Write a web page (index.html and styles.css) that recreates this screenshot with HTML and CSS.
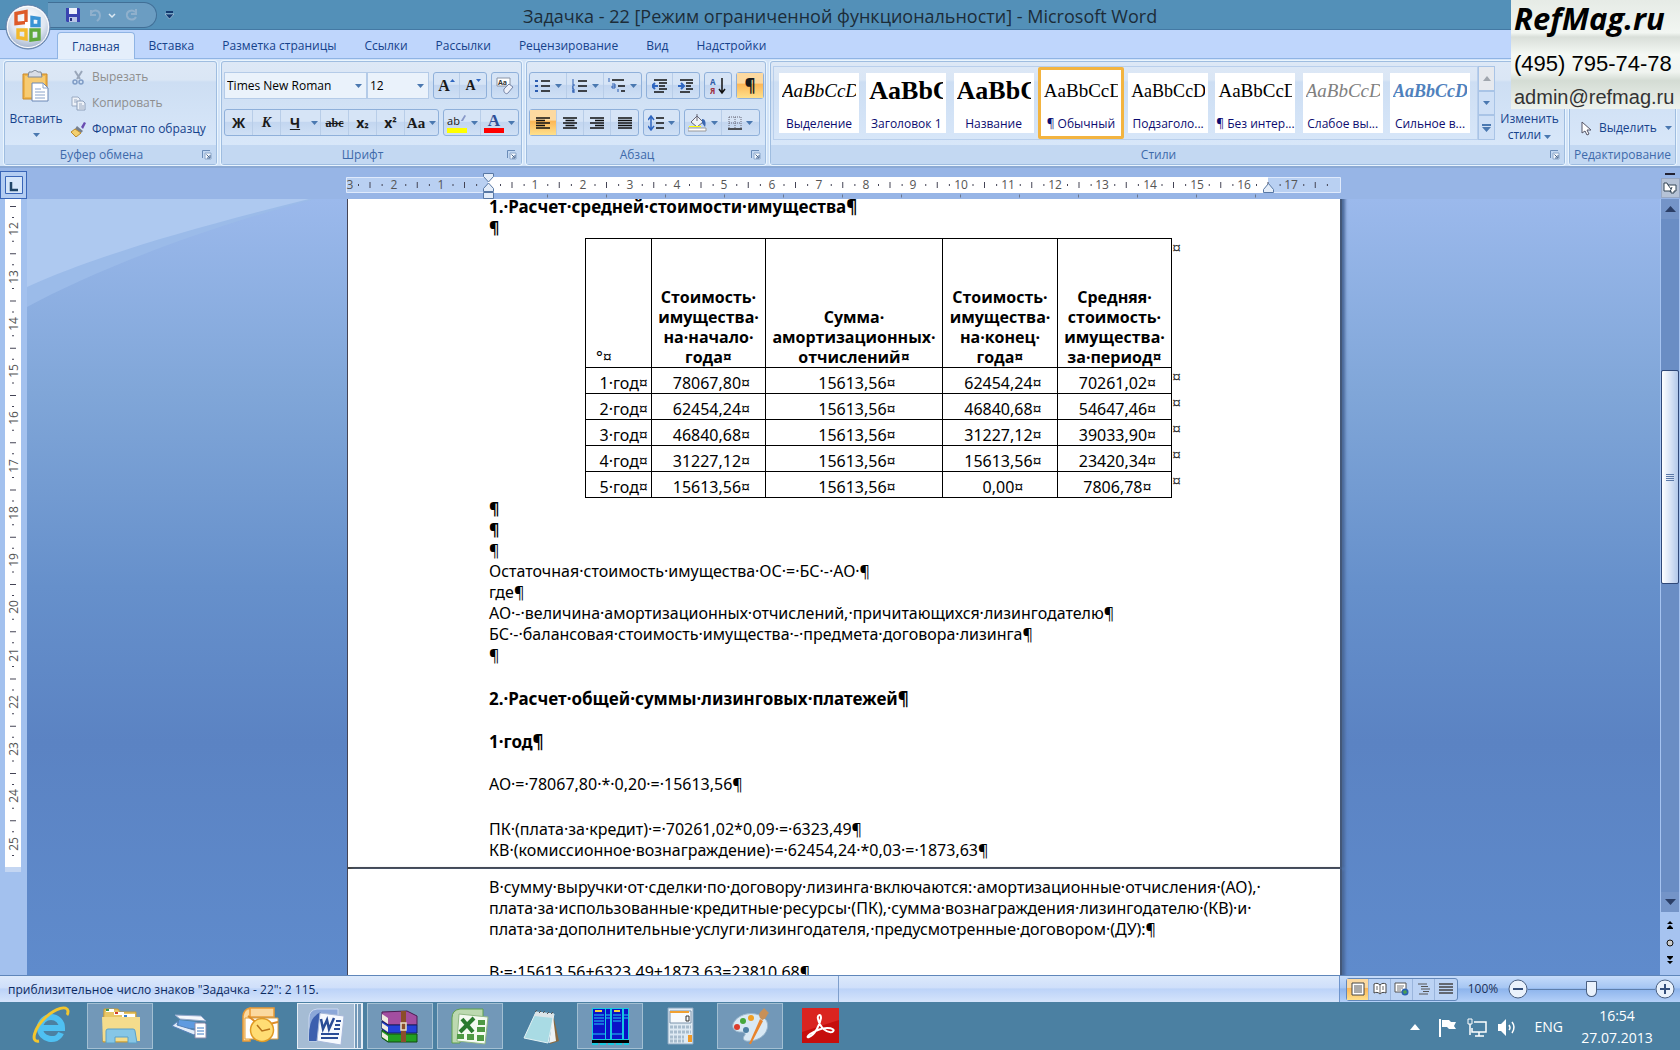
FILE: index.html
```html
<!DOCTYPE html>
<html lang="ru">
<head>
<meta charset="utf-8">
<title>Задачка - 22 [Режим ограниченной функциональности] - Microsoft Word</title>
<link rel="stylesheet" href="styles.css">
</head>
<body>
<svg class="defs" aria-hidden="true">
  <symbol id="caret" viewBox="0 0 7 4"><path d="M0 0h7L3.500 4z" fill="#4a78b0"/></symbol>
  <symbol id="launch" viewBox="0 0 10 10"><path d="M.5 8V.5H8" fill="none" stroke="#6a8cb8"/><path d="M3 3h6v6H3z" fill="#f4f8fd" stroke="#8aa6ca"/><path d="M4.500 4.500l3 3M8 5v3H5" fill="none" stroke="#44658f"/></symbol>
</svg>

<header class="titlebar">
  <button class="orb" aria-label="Кнопка Office">
    <svg viewBox="0 0 46 46" width="46" height="46">
      <defs><radialGradient id="orbg" cx=".5" cy=".35" r=".65"><stop offset="0" stop-color="#fff"/><stop offset=".6" stop-color="#dfe6f0"/><stop offset="1" stop-color="#9fb0cc"/></radialGradient></defs>
      <circle cx="23" cy="23" r="22" fill="url(#orbg)" stroke="#5f7fa8"/>
      <circle cx="23" cy="23" r="20.500" fill="none" stroke="#fff"/>
      <g fill="none" stroke-width="3.400">
        <path d="M11 9.500l10-2v11l-10 1z" stroke="#dd5a28"/>
        <path d="M27 13.500l7 1v7h-7z" stroke="#3a93d4"/>
        <path d="M13 26h8v9l-8-1.500z" stroke="#f3b92c"/>
        <path d="M26 26h8v9l-8 1z" stroke="#5fa83c"/>
      </g>
      <path d="M20 18h5v6h-5z" fill="#fff"/>
    </svg>
  </button>
  <div class="qat">
    <button aria-label="Сохранить"><svg viewBox="0 0 14 14" width="14" height="14"><path d="M1 0h12l1 1v13H1l-1-1V0z" fill="#3a44b0"/><path d="M3 0h8v6H3z" fill="#eef2fb"/><path d="M3 9h8v5H3z" fill="#b9c6e6"/><path d="M4 10h2v3H4z" fill="#26307e"/></svg></button>
    <button aria-label="Отменить"><svg viewBox="0 0 28 14" width="28" height="14"><path d="M3 5c3-4 9-3 9 3 0 3-2 4-3 5M3 2v5h5" fill="none" stroke="#8fb0cc" stroke-width="2"/><path d="M21 6l3 3 3-3" fill="none" stroke="#dbe8f2" stroke-width="1.500"/></svg></button>
    <button aria-label="Повторить"><svg viewBox="0 0 14 14" width="14" height="14"><path d="M11 4C8 1 2 3 3 8c1 4 7 5 9 1M12 1v5H7" fill="none" stroke="#8fb0cc" stroke-width="2"/></svg></button>
  </div>
  <button class="qat-more" aria-label="Настройка панели"><svg viewBox="0 0 9 8" width="9" height="8"><path d="M1 0h7v2H1z" fill="#123a70"/><path d="M0 3h9L4.500 8z" fill="#123a70" stroke="#dfeaf4" stroke-width=".5"/></svg></button>
  <h1>Задачка - 22 [Режим ограниченной функциональности] - Microsoft Word</h1>
</header>

<nav class="tabs">
  <button class="tab active">Главная</button>
  <button class="tab">Вставка</button>
  <button class="tab">Разметка страницы</button>
  <button class="tab">Ссылки</button>
  <button class="tab">Рассылки</button>
  <button class="tab">Рецензирование</button>
  <button class="tab">Вид</button>
  <button class="tab">Надстройки</button>
</nav>

<section class="ribbon">
  <div class="group clipboard">
    <div class="body">
      <button class="big">
        <svg viewBox="0 0 28 32" width="28" height="32"><path d="M1 4h24v25H1z" fill="#f0b54a" stroke="#c8892c"/><path d="M3 6h20v21H3z" fill="#f7cb72"/><path d="M7 2h3l3-2 3 2h3l1 5H6z" fill="#d8dde6" stroke="#7e8896"/><path d="M10 13h11l5 5v13H10z" fill="#fff" stroke="#6b87b5"/><path d="M21 13v5h5M13 19h6M13 22h10M13 25h10M13 28h10" fill="none" stroke="#8aa3ca"/></svg>
        <span>Вставить</span>
        <svg width="7" height="4"><use href="#caret"/></svg>
      </button>
      <div class="stack">
        <button class="line off"><svg viewBox="0 0 15 15" width="15" height="15"><path d="M4 1l5 8M11 1L6 9" stroke="#9aa7ba" stroke-width="2"/><circle cx="4" cy="12" r="2" fill="none" stroke="#7f9cc6" stroke-width="1.500"/><circle cx="10" cy="12" r="2" fill="none" stroke="#7f9cc6" stroke-width="1.500"/></svg>Вырезать</button>
        <button class="line off"><svg viewBox="0 0 15 15" width="15" height="15"><path d="M1 1h6l2 2v7H1z" fill="#eef2f8" stroke="#9aaac2"/><path d="M6 5h6l2 2v7H6z" fill="#eef2f8" stroke="#8d9fba"/><path d="M3 4h3M3 6h3M8 8h3M8 10h5M8 12h5" stroke="#9aaac2"/></svg>Копировать</button>
        <button class="line"><svg viewBox="0 0 15 15" width="15" height="15"><path d="M10 5l3-5 2 1-3 6z" fill="#6a4db0"/><path d="M6 4l6 5-2 2-6-4z" fill="#77808e"/><path d="M4 7l6 4-5 4-5-5z" fill="#f3cf6e" stroke="#b98a2c"/></svg>Формат по образцу</button>
      </div>
    </div>
    <footer><span>Буфер обмена</span><button class="launch" aria-label="Буфер обмена"><svg width="10" height="10"><use href="#launch"/></svg></button></footer>
  </div>

  <div class="group font">
    <div class="body rows">
      <div class="row">
        <div class="combos">
          <label class="combo name"><select aria-label="Шрифт"><option>Times New Roman</option></select><svg width="7" height="4"><use href="#caret"/></svg></label>
          <label class="combo size"><select aria-label="Размер шрифта"><option>12</option></select><svg width="7" height="4"><use href="#caret"/></svg></label>
        </div>
        <div class="set"><button class="b26 serif grow">A<svg viewBox="0 0 5 14" width="5" height="14"><path d="M0 3h5L2.500 0z" fill="#2f66c0"/></svg></button><button class="b26 serif shrink">A<svg viewBox="0 0 5 14" width="5" height="14"><path d="M0 0h5L2.500 3z" fill="#2f66c0"/></svg></button></div>
        <div class="set"><button class="b26" aria-label="Очистить формат"><svg viewBox="0 0 18 18" width="18" height="18"><path d="M1 1h13v8H1z" fill="#fff" stroke="#8a94a6"/><text x="2" y="8" font-size="7" font-weight="700" fill="#333">Aa</text><path d="M8 12l5-5 4 3-5 6c-2 2-5-1-4-4z" fill="#eef1fa" stroke="#7584a6"/></svg></button></div>
      </div>
      <div class="row">
        <div class="set">
          <button class="b28 bold">Ж</button><button class="b28 bold ital serif">К</button><button class="b28 bold under">Ч</button><button class="drop" aria-label="Подчеркивание"><svg width="7" height="4"><use href="#caret"/></svg></button><button class="b28 bold strike serif">abc</button><button class="b28 bold">x<sub>₂</sub></button><button class="b28 bold">x<sup>²</sup></button><button class="b33 serif bold">Aa<svg width="7" height="4"><use href="#caret"/></svg></button>
        </div>
        <div class="set">
          <button class="b37 hl"><span class="ink yellow">ab<svg viewBox="0 0 8 10" width="6" height="10"><path d="M1 9l5-8 2 1-4 7z" fill="#8898c8"/></svg></span><svg width="7" height="4"><use href="#caret"/></svg></button><button class="b37"><span class="ink red">A</span><svg width="7" height="4"><use href="#caret"/></svg></button>
        </div>
      </div>
    </div>
    <footer><span>Шрифт</span><button class="launch" aria-label="Шрифт"><svg width="10" height="10"><use href="#launch"/></svg></button></footer>
  </div>

  <div class="group para">
    <div class="body rows">
      <div class="row">
        <div class="set">
          <button class="b37" aria-label="Маркеры"><svg viewBox="0 0 16 14" width="16" height="14"><path d="M0 1h3v2H0zM0 6h3v2H0zM0 11h3v2H0z" fill="#2b5cb0"/><path d="M6 2h9M6 7h9M6 12h9" stroke="#111" stroke-width="1.500"/></svg><svg width="7" height="4"><use href="#caret"/></svg></button><button class="b37" aria-label="Нумерация"><svg viewBox="0 0 16 14" width="16" height="14"><path d="M1 0v4M0 5h2v2H0v2h2M0 10h2v2H0h2v2H0" fill="none" stroke="#2b5cb0"/><path d="M6 2h9M6 7h9M6 12h9" stroke="#111" stroke-width="1.500"/></svg><svg width="7" height="4"><use href="#caret"/></svg></button><button class="b37" aria-label="Многоуровневый список"><svg viewBox="0 0 18 15" width="18" height="15"><path d="M1 0v4M4 6h3v4H4V8h3M10 11v3" fill="none" stroke="#2b5cb0"/><path d="M4 2h12M10 8h7M13 13h4" stroke="#111" stroke-width="1.500"/></svg><svg width="7" height="4"><use href="#caret"/></svg></button>
        </div>
        <div class="set">
          <button class="b26" aria-label="Уменьшить отступ"><svg viewBox="0 0 16 14" width="16" height="14"><path d="M2 1h13M7 4h8M7 7h6M7 10h8M2 13h10" stroke="#111" stroke-width="1.500"/><path d="M6 7H1m2-3L0 7l3 3" fill="none" stroke="#2f66c0" stroke-width="2"/></svg></button><button class="b26" aria-label="Увеличить отступ"><svg viewBox="0 0 16 14" width="16" height="14"><path d="M2 1h13M8 4h7M8 7h5M8 10h7M2 13h10" stroke="#111" stroke-width="1.500"/><path d="M0 7h5M3 4l3 3-3 3" fill="none" stroke="#2f66c0" stroke-width="2"/></svg></button>
        </div>
        <div class="set"><button class="b26" aria-label="Сортировка"><svg viewBox="0 0 16 18" width="16" height="18"><text x="0" y="8" font-size="8" font-weight="700" fill="#2f5ca8">А</text><text x="0" y="17" font-size="8" font-weight="700" fill="#a03040">Я</text><path d="M12 1v14M9 12l3 4 3-4" fill="none" stroke="#111" stroke-width="1.500"/></svg></button></div>
        <div class="set"><button class="b26 on pil">¶</button></div>
      </div>
      <div class="row">
        <div class="set">
          <button class="b27 on" aria-label="По левому краю"><svg viewBox="0 0 14 12" width="14" height="12"><path d="M0 1h14M0 3.500h9M0 6h14M0 8.500h9M0 11h14" stroke="#111" stroke-width="1.300"/></svg></button><button class="b27" aria-label="По центру"><svg viewBox="0 0 14 12" width="14" height="12"><path d="M0 1h14M2.500 3.500h9M0 6h14M2.500 8.500h9M0 11h14" stroke="#111" stroke-width="1.300"/></svg></button><button class="b27" aria-label="По правому краю"><svg viewBox="0 0 14 12" width="14" height="12"><path d="M0 1h14M5 3.500h9M0 6h14M5 8.500h9M0 11h14" stroke="#111" stroke-width="1.300"/></svg></button><button class="b27" aria-label="По ширине"><svg viewBox="0 0 14 12" width="14" height="12"><path d="M0 1h14M0 3.500h14M0 6h14M0 8.500h14M0 11h14" stroke="#111" stroke-width="1.300"/></svg></button>
        </div>
        <div class="set"><button class="b35" aria-label="Интервал"><svg viewBox="0 0 16 16" width="16" height="16"><path d="M3 2v12M0 5l3-4 3 4M0 11l3 4 3-4" fill="none" stroke="#2f66c0" stroke-width="1.500"/><path d="M8 3h8M8 8h8M8 13h8" stroke="#111" stroke-width="1.500"/></svg><svg width="7" height="4"><use href="#caret"/></svg></button></div>
        <div class="set">
          <button class="b37" aria-label="Заливка"><svg viewBox="0 0 19 18" width="19" height="18"><path d="M3 8l6-6 6 6-6 5z" fill="#eef2f8" stroke="#667"/><path d="M9 0v7" stroke="#667"/><path d="M14 5c4 0 4 5 3 8l-3-4z" fill="#3a66b0"/><path d="M0 14h18v3H0z" fill="#fff" stroke="#999"/><path d="M1 12h12v1H1z" fill="#ff0"/></svg><svg width="7" height="4"><use href="#caret"/></svg></button><button class="b37" aria-label="Границы"><svg viewBox="0 0 14 14" width="14" height="14"><path d="M1 1h12v12M1 1v12M7 1v12M1 7h12" fill="none" stroke="#667" stroke-dasharray="1 1"/><path d="M0 13h14" stroke="#222" stroke-width="1.500"/></svg><svg width="7" height="4"><use href="#caret"/></svg></button>
        </div>
      </div>
    </div>
    <footer><span>Абзац</span><button class="launch" aria-label="Абзац"><svg width="10" height="10"><use href="#launch"/></svg></button></footer>
  </div>

  <div class="group styles">
    <div class="body">
      <div class="gallery">
        <button class="tile"><span class="sample ital">AaBbCcDd</span><span class="cap">Выделение</span></button>
        <button class="tile"><span class="sample head">AaBbCc</span><span class="cap">Заголовок 1</span></button>
        <button class="tile"><span class="sample head">AaBbCc</span><span class="cap">Название</span></button>
        <button class="tile picked"><span class="sample">AaBbCcDd</span><span class="cap">¶ Обычный</span></button>
        <button class="tile"><span class="sample sub">AaBbCcDd</span><span class="cap">Подзаголо...</span></button>
        <button class="tile"><span class="sample">AaBbCcDd</span><span class="cap">¶ Без интер...</span></button>
        <button class="tile"><span class="sample ital gray">AaBbCcDd</span><span class="cap">Слабое вы...</span></button>
        <button class="tile"><span class="sample ital strong">AaBbCcDd</span><span class="cap">Сильное в...</span></button>
      </div>
      <div class="gscroll">
        <button class="dim" aria-label="Вверх"><svg viewBox="0 0 8 5" width="8" height="5"><path d="M0 5h8L4 0z" fill="#a0a6ae"/></svg></button>
        <button aria-label="Вниз"><svg width="7" height="4"><use href="#caret"/></svg></button>
        <button aria-label="Еще"><svg viewBox="0 0 9 8" width="9" height="8"><path d="M0 0h9v2H0zM0 3h9L4.500 8z" fill="#4a78b0"/></svg></button>
      </div>
      <button class="restyle">Изменить<span>стили <svg width="7" height="4"><use href="#caret"/></svg></span></button>
    </div>
    <footer><span>Стили</span><button class="launch" aria-label="Стили"><svg width="10" height="10"><use href="#launch"/></svg></button></footer>
  </div>

  <div class="group edit">
    <div class="body">
      <button class="line"><svg viewBox="0 0 10 15" width="10" height="15"><path d="M1 1v11l3-2 2 4 2-1-2-4h4z" fill="#fff" stroke="#556"/></svg><span>Выделить</span><svg width="7" height="4"><use href="#caret"/></svg></button>
    </div>
    <footer><span>Редактирование</span></footer>
  </div>
</section>

<aside class="mark">
  <strong>RefMag.ru</strong>
  <span class="phone">(495) 795-74-78</span>
  <a href="#mail">admin@refmag.ru</a>
</aside>

<div class="rulerbar">
  <button class="corner" aria-label="Табуляция"><svg viewBox="0 0 18 18" width="18" height="18"><path d="M.5.5h17v17H.5z" fill="#d5e5fa" stroke="#3a66b8"/><path d="M6 6v8h7" fill="none" stroke="#1e4468" stroke-width="2.500"/></svg></button>
  <svg class="hruler" viewBox="0 0 995 31" width="995" height="31">
    <path d="M.5 9.500h994v15H.5z" fill="#b9d0f2" stroke="#dfeafc"/>
    <path d="M142 9h780v16H142z" fill="#fff"/>
    <g stroke="#445" fill="none">
      <path d="M23.500 17h120" stroke-width="6" stroke-dasharray="1 46.250"/>
      <path d="M165.500 17h820" stroke-width="6" stroke-dasharray="1 46.250"/>
      <path d="M12 17h130" stroke-width="2" stroke-dasharray="1 22.625"/>
      <path d="M154 17h840" stroke-width="2" stroke-dasharray="1 22.625"/>
      <path d="M201 28h722" stroke-width="3" stroke-dasharray="1 58" stroke="#6b7890"/>
    </g>
    <g class="num"><text x="4" y="21">3</text><text x="48" y="21">2</text><text x="95" y="21">1</text><text x="189" y="21">1</text><text x="237" y="21">2</text><text x="284" y="21">3</text><text x="331" y="21">4</text><text x="378" y="21">5</text><text x="426" y="21">6</text><text x="473" y="21">7</text><text x="520" y="21">8</text><text x="567" y="21">9</text><text x="615" y="21">10</text><text x="662" y="21">11</text><text x="709" y="21">12</text><text x="756" y="21">13</text><text x="804" y="21">14</text><text x="851" y="21">15</text><text x="898" y="21">16</text><text x="945" y="21">17</text></g>
    <g fill="#e4edf9" stroke="#5878a4"><path d="M137.500 5.500h10v3l-5 5.500-5-5.500z"/><path d="M137.500 23.500v-3l5-5.500 5 5.500v3z"/><path d="M137.500 24.500h10v6h-10z"/><path d="M917.500 24.500v-3l5-6 5 6v3z"/></g>
  </svg>
  <div class="topright"><span></span><button aria-label="Линейка"><svg viewBox="0 0 14 14" width="14" height="14"><path d="M1 2h3l1 2h8v6h-2v2H8v-2H1z" fill="#fff" stroke="#345"/><path d="M5 4l3 4M9 6l-2 5" stroke="#345"/></svg></button></div>
</div>

<main class="workspace">
  <div class="vruler">
    <svg viewBox="0 0 27 776" width="27" height="776">
      <path d="M5 0h16v673H5z" fill="#c4d6f2"/><path d="M5 0h16v668H5z" fill="#fff"/>
      <g stroke="#445" fill="none"><path d="M13 7v660" stroke-width="6" stroke-dasharray="1 46.250"/><path d="M13 18v642" stroke-width="2" stroke-dasharray="1 22.625"/></g>
      <g class="num vert"><text x="-30" y="18">12</text><text x="-78" y="18">13</text><text x="-125" y="18">14</text><text x="-172" y="18">15</text><text x="-219" y="18">16</text><text x="-267" y="18">17</text><text x="-314" y="18">18</text><text x="-361" y="18">19</text><text x="-408" y="18">20</text><text x="-456" y="18">21</text><text x="-503" y="18">22</text><text x="-550" y="18">23</text><text x="-597" y="18">24</text><text x="-645" y="18">25</text></g>
    </svg>
  </div>
  <div class="canvas">
    <svg class="swoosh" viewBox="0 0 300 112" width="300" height="112"><path d="M0 0h288C180 28 70 70 0 108z" fill="#9bbbe9"/><path d="M0 0h282C170 28 70 56 0 88z" fill="#aec9f0"/></svg>
    <article class="doc">
      <div class="page first">
        <h2>1.·Расчет·средней·стоимости·имущества¶</h2>
        <p class="pil">¶</p>
        <div class="tablewrap">
        <table>
          <thead><tr><td class="lead">°¤</td><th>Стоимость·<br>имущества·<br>на·начало·<br>года¤</th><th>Сумма·<br>амортизационных·<br>отчислений¤</th><th>Стоимость·<br>имущества·<br>на·конец·<br>года¤</th><th>Средняя·<br>стоимость·<br>имущества·<br>за·период¤</th><td class="end">¤</td></tr></thead>
          <tbody>
            <tr><td>1·год¤</td><td>78067,80¤</td><td>15613,56¤</td><td>62454,24¤</td><td>70261,02¤</td><td class="end">¤</td></tr>
            <tr><td>2·год¤</td><td>62454,24¤</td><td>15613,56¤</td><td>46840,68¤</td><td>54647,46¤</td><td class="end">¤</td></tr>
            <tr><td>3·год¤</td><td>46840,68¤</td><td>15613,56¤</td><td>31227,12¤</td><td>39033,90¤</td><td class="end">¤</td></tr>
            <tr><td>4·год¤</td><td>31227,12¤</td><td>15613,56¤</td><td>15613,56¤</td><td>23420,34¤</td><td class="end">¤</td></tr>
            <tr><td>5·год¤</td><td>15613,56¤</td><td>15613,56¤</td><td>0,00¤</td><td>7806,78¤</td><td class="end">¤</td></tr>
          </tbody>
        </table>
        </div>
        <p class="pil">¶</p>
        <p class="pil">¶</p>
        <p>¶</p>
        <p>Остаточная·стоимость·имущества·ОС·=·БС·-·АО·¶</p>
        <p>где¶</p>
        <p>АО·-·величина·амортизационных·отчислений,·причитающихся·лизингодателю¶</p>
        <p>БС·-·балансовая·стоимость·имущества·-·предмета·договора·лизинга¶</p>
        <p>¶</p>
        <h2 class="gap">2.·Расчет·общей·суммы·лизинговых·платежей¶</h2>
        <h3 class="gap">1·год¶</h3>
        <p class="gap">АО·=·78067,80·*·0,20·=·15613,56¶</p>
        <p class="gap wide">ПК·(плата·за·кредит)·=·70261,02*0,09·=·6323,49¶</p>
        <p>КВ·(комиссионное·вознаграждение)·=·62454,24·*0,03·=·1873,63¶</p>
      </div>
      <div class="page next">
        <p>В·сумму·выручки·от·сделки·по·договору·лизинга·включаются:·амортизационные·отчисления·(АО),·<br>плата·за·использованные·кредитные·ресурсы·(ПК),·сумма·вознаграждения·лизингодателю·(КВ)·и·<br>плата·за·дополнительные·услуги·лизингодателя,·предусмотренные·договором·(ДУ):¶</p>
        <p class="gap">В·=·15613,56+6323,49+1873,63=23810,68¶</p>
      </div>
    </article>
  </div>
  <div class="vscroll">
    <button class="up" aria-label="Прокрутить вверх"><svg viewBox="0 0 11 6" width="11" height="6"><path d="M0 6h11L5.500 0z" fill="#2b3e66"/></svg></button>
    <div class="track"><div class="thumb"><i></i><i></i><i></i><i></i></div></div>
    <button class="down" aria-label="Прокрутить вниз"><svg viewBox="0 0 11 6" width="11" height="6"><path d="M0 0h11L5.500 6z" fill="#2b3e66"/></svg></button>
    <div class="browse">
      <button aria-label="Предыдущая страница"><svg viewBox="0 0 6 8" width="6" height="8"><path d="M0 3l3-3 3 3zM0 7l3-3 3 3zM0 7h6v1H0z"/></svg></button>
      <button aria-label="Объект перехода"><svg viewBox="0 0 8 8" width="8" height="8"><circle cx="4" cy="4" r="3" fill="#ccc" stroke="#111"/></svg></button>
      <button aria-label="Следующая страница"><svg viewBox="0 0 6 8" width="6" height="8"><path d="M0 0h6v1H0zM0 1h6L3 4zM0 5h6L3 8z"/></svg></button>
    </div>
  </div>
</main>

<footer class="status">
  <span class="msg">приблизительное число знаков "Задачка - 22": 2 115.</span>
  <span class="rest"></span>
  <div class="views">
    <div class="viewset">
      <button class="on" aria-label="Разметка страницы"><svg viewBox="0 0 14 14" width="14" height="14"><path d="M1 1h12v12H1z" fill="#fff" stroke="#444"/><path d="M3 4h8M3 6h8M3 8h8M3 10h8" stroke="#555"/></svg></button><button aria-label="Режим чтения"><svg viewBox="0 0 14 14" width="14" height="14"><path d="M1 2c2-1 4-1 6 1 2-2 4-2 6-1v9c-2-1-4-1-6 1-2-2-4-2-6-1z" fill="#fff" stroke="#444"/><path d="M7 3v9M3 5h2M3 7h2M9 5h2M9 7h2" stroke="#666"/></svg></button><button aria-label="Веб-документ"><svg viewBox="0 0 15 14" width="15" height="14"><path d="M1 1h11v9H1z" fill="#fff" stroke="#555"/><path d="M3 4h7M3 6h6M3 8h4" stroke="#777"/><circle cx="11" cy="10" r="3.500" fill="#2a62b0"/><path d="M9 9l3-1 1 3-3 1z" fill="#4aa050"/></svg></button><button aria-label="Структура"><svg viewBox="0 0 14 14" width="14" height="14"><path d="M1 2h9M4 4.500h7M4 7h9M6 9.500h6M2 12h9" stroke="#555"/></svg></button><button aria-label="Черновик"><svg viewBox="0 0 14 12" width="14" height="12"><path d="M0 1h14M0 4h14M0 7h14M0 10h14" stroke="#444" stroke-width="1.500"/></svg></button>
    </div>
    <button class="zoomval">100%</button>
    <button class="round" aria-label="Уменьшить"><svg viewBox="0 0 20 20" width="20" height="20"><circle cx="10" cy="10" r="9" fill="#eaf2fc" stroke="#4a5f80"/><path d="M5 10h10" stroke="#35507c" stroke-width="2"/></svg></button>
    <input type="range" min="10" max="200" value="105" aria-label="Масштаб">
    <button class="round" aria-label="Увеличить"><svg viewBox="0 0 20 20" width="20" height="20"><circle cx="10" cy="10" r="9" fill="#eaf2fc" stroke="#4a5f80"/><path d="M5 10h10M10 5v10" stroke="#35507c" stroke-width="2"/></svg></button>
  </div>
</footer>

<nav class="taskbar">
  <div class="apps">
    <button class="app" aria-label="Internet Explorer"><svg viewBox="0 0 40 40" width="40" height="40"><path d="M11 22h21a11 11 0 0 0-22 0c0 12 17 15 21 5" fill="none" stroke="#4fc0f2" stroke-width="6"/><path d="M9 35C0 37 4 22 16 11 26 2 37-1 38 5c0 2 0 3-1 4" fill="none" stroke="#f3c62e" stroke-width="3"/></svg></button>
    <button class="app open" aria-label="Проводник"><svg viewBox="0 0 40 40" width="40" height="40"><path d="M4 3h14l2 3h16v30H3z" fill="#e9c766" stroke="#c79b36"/><path d="M6 3h8v3H6z" fill="#fff"/><path d="M14 6h10v3H14z" fill="#fff"/><path d="M22 8h13v4H22z" fill="#fff"/><path d="M6 3h3v2H6z" fill="#3a9a4a"/><path d="M15 6h3v2h-3z" fill="#d2402c"/><path d="M24 9h3v2h-3z" fill="#3a80d0"/><path d="M2 11h38v24H3z" fill="#f4dc8c"/><path d="M6 25q0-2 2-2h25q2 0 2 2l2 12h-9v-6H15v6H6z" fill="#86c6e6" stroke="#5aa0c8"/></svg></button>
    <button class="app" aria-label="Сканер"><svg viewBox="0 0 40 40" width="40" height="40"><path d="M5 9l26 1 5 5-26-2z" fill="#f4f7fc" stroke="#93a8cc"/><path d="M9 14l18 2 3 7-22-2z" fill="#5f9be0"/><path d="M8 15l-6 5 22 9 8-7-8 2-17-5z" fill="#e2ecf8" stroke="#5580b8"/><path d="M25 17h10l1 1v14H25z" fill="#fff" stroke="#88a"/><path d="M27 22h7M27 25h7M27 28h7" stroke="#3f7ac4"/></svg></button>
    <button class="app" aria-label="Outlook"><svg viewBox="0 0 40 40" width="40" height="40"><path d="M10 2h24v9H10zM3 10q1-7 7-8v33H3z" fill="#fbd9a0" stroke="#ec9a34" stroke-width="1.500"/><path d="M5 12h33v21H5z" fill="#fff" stroke="#e0a040"/><path d="M8 10l13 10L38 16" fill="none" stroke="#dd8c28" stroke-width="2"/><circle cx="22" cy="24" r="11.500" fill="#ffdd74" stroke="#e09a24" stroke-width="1.500"/><path d="M17 19l5 6 8-2" fill="none" stroke="#b8741a" stroke-width="1.500"/></svg></button>
    <button class="app open current" aria-label="Word"><svg viewBox="0 0 40 40" width="40" height="40"><path d="M3 12q0-8 8-9h21v12H11v20H3z" fill="#8ba7d8" stroke="#cbd9f2"/><path d="M3 30q0-20 12-24v29H3z" fill="#3c5fae"/><path d="M14 7l24 3-3 29-24-4z" fill="#f6f9fe" stroke="#a8b9da"/><path d="M15 13l2 10 4-9 2 9 5-11" fill="none" stroke="#2a4c96" stroke-width="2.500"/><path d="M30 15h5M29 19h5M28 23h6M15 28h18M15 32h17" stroke="#2a4c96" stroke-width="2"/></svg></button>
    <button class="app open" aria-label="WinRAR"><svg viewBox="0 0 40 40" width="40" height="40"><path d="M2 6l25-1 10 5v9H8l-6-5z" fill="#a24ea0" stroke="#4a1c50"/><path d="M2 15l6 4h29v8H8l-6-4z" fill="#2440d8" stroke="#122060"/><path d="M2 24l6 4h29v8H8l-6-4z" fill="#22a022" stroke="#104a10"/><path d="M2 8l6 4v6l-6-4zM2 17l6 4v5l-6-4zM2 26l6 4v5l-6-4z" fill="#f0ece0"/><path d="M21 5h5v31h-5z" fill="#8a4e2a"/><path d="M21 17h5v7h-5z" fill="none" stroke="#e8e0c8" stroke-width="1.500"/></svg></button>
    <button class="app open" aria-label="Excel"><svg viewBox="0 0 40 40" width="40" height="40"><path d="M2 12q0-8 8-9h23v10H10v24H2z" fill="#bcd9b0" stroke="#5fa04c"/><path d="M9 8l29 3-3 27-28-3z" fill="#f4faf1" stroke="#90b884"/><path d="M12 13l11 13M24 12L10 26" stroke="#2a7a2e" stroke-width="4"/><path d="M28 14h7v5h-7zM27 21h8v5h-8zM7 28h7v5H7zM17 28h7v6h-7zM27 29h7v6h-7z" fill="#4f9a44"/></svg></button>
    <button class="app" aria-label="Блокнот"><svg viewBox="0 0 40 40" width="40" height="40"><path d="M33 8l6 27-9 3z" fill="#8a6a40"/><path d="M16 6l18 2-6 29L4 32z" fill="#a9dbe4" stroke="#e4f2f4"/><path d="M16 6l18 2-1 4-19-2z" fill="#dde5e8"/><path d="M33 10l3 25-7 2z" fill="#eef3f4"/><path d="M15 6l2-2m2 3l2-2m2 2l2-2m2 3l2-2m2 2l2-2" stroke="#555"/></svg></button>
    <button class="app open" aria-label="База данных"><svg viewBox="0 0 40 40" width="40" height="40"><path d="M2 2h37v32H2z" fill="#18c8e0"/><path d="M3 3h12v30H3zM16 3h4v30h-4zM22 3h10v30H22zM34 3h4v30h-4z" fill="#0a12c8"/><path d="M5 5h7M24 5h6" stroke="#f0d040" stroke-width="2"/><path d="M4 9h10M4 12h10M4 15h10M4 18h10M16 9h4M16 12h4M23 9h8M23 12h8M23 15h8M34 9h4M34 12h4M3 28h12M22 28h10" stroke="#20d0f0"/><path d="M2 34h37v3H2z" fill="#000"/><path d="M2 38h37" stroke="#18c8e0" stroke-width="2" stroke-dasharray="6 2"/></svg></button>
    <button class="app" aria-label="Калькулятор"><svg viewBox="0 0 40 40" width="40" height="40"><path d="M8 2h25v36H8z" fill="#dfeaf3" stroke="#8aa6c0"/><path d="M10 5h21v12H10z" fill="#f7fafc" stroke="#7a93ac"/><path d="M10 6h19" stroke="#f0a030" stroke-width="2"/><path d="M26 10h3v5h-3z" fill="none" stroke="#333"/><path d="M10 21h21M10 26h21M10 31h14M10 35h14" stroke="#a8bccd" stroke-width="3" stroke-dasharray="3 1"/><path d="M28 29h4v7h-4z" fill="#f09a28"/></svg></button>
    <button class="app open" aria-label="Paint"><svg viewBox="0 0 40 40" width="40" height="40"><path d="M3 18C8 6 28 4 36 14c5 8-2 20-16 21-7 1-8-3-5-6 1-3-3-3-6-3-5-1-7-4-6-8z" fill="#d9e9f4" stroke="#9ab6cc"/><circle cx="7" cy="21" r="3" fill="#dc3c2c"/><circle cx="13" cy="15" r="3" fill="#46a83c"/><circle cx="21" cy="12" r="3" fill="#f0a024"/><circle cx="16" cy="24" r="3" fill="#4e80a4"/><path d="M30 13l3 2-12 23-2 0z" fill="#e8842c"/><path d="M30 12c-3-5 2-7 4-10l5 5c-3 2-2 6-7 7z" fill="#c89058"/></svg></button>
    <button class="app" aria-label="Adobe Reader"><svg viewBox="0 0 40 40" width="40" height="40"><path d="M2 2h37v35H2z" fill="#c60e0c"/><path d="M2 2h37v12L2 26z" fill="#da2420"/><path d="M9 31c6-2 11-13 12-19 0-5-4-3-3 1 2 9 9 14 14 13 4-2 0-4-5-4-6 0-12 3-17 6-3 2-3 4-1 3z" fill="none" stroke="#fff" stroke-width="2"/></svg></button>
  </div>
  <div class="tray">
    <button aria-label="Скрытые значки"><svg viewBox="0 0 10 6" width="10" height="6"><path d="M0 6h10L5 0z" fill="#fff"/></svg></button>
    <button aria-label="Центр поддержки"><svg viewBox="0 0 19 19" width="19" height="19"><path d="M2 1v18" stroke="#fff" stroke-width="2"/><path d="M4 2h7l2 2h5l-2 4 2 3h-7l-2-2H4z" fill="#fff"/></svg></button>
    <button aria-label="Сеть"><svg viewBox="0 0 20 19" width="20" height="19"><path d="M7 4h12v10H5v-4M8 18h9M12 14v4M3 6v11" fill="none" stroke="#fff" stroke-width="1.500"/><path d="M1 1h4v5H1z" fill="none" stroke="#fff"/></svg></button>
    <button aria-label="Громкость"><svg viewBox="0 0 20 19" width="20" height="19"><path d="M1 6h3l5-5v17l-5-5H1z" fill="#fff"/><path d="M12 7q2 3 0 5M15 4q4 5 0 11" fill="none" stroke="#fff" stroke-width="1.500"/></svg></button>
    <button class="lang">ENG</button>
    <button class="clock"><span>16:54</span><span>27.07.2013</span></button>
  </div>
</nav>
</body>
</html>
```
FILE: styles.css
```css
* { box-sizing: border-box; }
body {
  margin: 0;
  height: 100vh;
  display: flex;
  flex-direction: column;
  overflow: hidden;
  position: relative;
  font: 12px/16px "Open Sans", "Noto Sans", sans-serif;
  color: #15428b;
}
button {
  font: inherit;
  color: inherit;
  background: none;
  border: 0;
  padding: 0;
  display: flex;
  align-items: center;
  justify-content: center;
}
.defs { display: none; }
svg { flex: none; }
svg text { font-family: "Open Sans", sans-serif; }

/* title bar */
.titlebar {
  position: relative;
  flex: none;
  height: 30px;
  display: flex;
  align-items: center;
  background: #5390b8;
  border-bottom: 1px solid #4479a4;
}
.titlebar h1 {
  flex: 1;
  margin: 0;
  padding: 2px 0 0 349px;
  font-size: 18px;
  line-height: 28px;
  font-weight: 400;
  color: #1c2c38;
  white-space: nowrap;
}
.orb { position: absolute; left: 5px; top: 4px; z-index: 2; }
.qat {
  margin-left: 48px;
  width: 109px;
  height: 26px;
  padding-left: 18px;
  gap: 8px;
  display: flex;
  align-items: center;
  background: #6b9dc2;
  border: 1px solid #416f96;
  border-left: 0;
  border-radius: 0 13px 13px 0;
}
.qat-more { margin-left: 8px; width: 9px; }

/* tabs */
.tabs {
  flex: none;
  height: 29px;
  padding-left: 57px;
  display: flex;
  align-items: flex-end;
  background: #bfd6fc;
  border-bottom: 1px solid #8fb4e4;
}
.tab { height: 27px; padding: 2px 14px 0; }
.tab.active {
  margin-bottom: -1px;
  background: #e4eefb;
  border: 1px solid #8fb4e4;
  border-bottom: 0;
  border-radius: 4px 4px 0 0;
}

/* ribbon */
.ribbon {
  flex: none;
  height: 109px;
  padding: 2px 4px 1px;
  display: flex;
  gap: 4px;
  background: #d3e4f8;
  border-bottom: 2px solid #8ba9d4;
  align-items: stretch;
}
.group {
  display: flex;
  flex-direction: column;
  border: 1px solid #9fbde0;
  border-radius: 3px;
  box-shadow: 0 0 0 1px #eaf5fe;
  background: linear-gradient(#dde8f6 0, #dae6f5 18px, #cddef3 20px, #d8e7f9 84px);
}
.group .body { flex: 1; display: flex; min-height: 0; }
.group footer {
  height: 19px;
  display: flex;
  align-items: center;
  justify-content: center;
  background: #c3d8f2;
  color: #3e6aaa;
}
.group footer span { flex: 1; text-align: center; }
.launch { width: 18px; }
.clipboard { width: 213px; }
.font { width: 301px; }
.para { width: 240px; }
.styles { flex: 1; min-width: 0; }
.edit { width: 107px; }

.big {
  width: 62px;
  flex-direction: column;
  justify-content: flex-start;
  padding-top: 8px;
}
.big span { margin: 9px 0 6px; }
.stack { display: flex; flex-direction: column; padding: 2px 0 0 4px; }
.line { height: 26px; gap: 6px; justify-content: flex-start; }
.off { color: #8e8e8e; }

.rows { flex-direction: column; gap: 10px; padding: 10px 2px 0; }
.row { display: flex; gap: 4px; height: 27px; }
.combos { display: flex; width: 206px; }
.combo {
  display: flex;
  align-items: center;
  background: #eaf2fb;
  border: 1px solid #b4cbe8;
  padding: 0 4px 0 2px;
}
.combo.name { flex: 1; }
.combo.size { width: 62px; }
.combo select {
  flex: 1;
  min-width: 0;
  appearance: none;
  border: 0;
  padding: 0;
  background: none;
  font: inherit;
  color: #000;
}
.set {
  display: flex;
  border: 1px solid #8fb0da;
  border-radius: 3px;
  background: linear-gradient(#d6e4f6 0 45%, #c3d6f0 50%, #cfe0f5);
}
.set button { border-right: 1px solid #b8cde8; color: #1a1a1a; gap: 4px; }
.set button:last-child, .set .under { border-right: 0; }
.b26 { width: 26px; }
.b27 { width: 27px; }
.b28 { width: 28px; }
.b33 { width: 33px; }
.b35 { width: 35px; }
.b37 { width: 37px; }
.drop { width: 12px; }
.serif { font-family: "Liberation Serif", serif; }
.bold { font-weight: 700; font-size: 14px; }
.ital { font-style: italic; }
.under { text-decoration: underline; }
.strike { font-size: 12px; text-decoration: line-through; }
.set .grow, .set .shrink { font-size: 16px; font-weight: 700; gap: 0; }
.set .shrink { font-size: 14px; }
.set sub, .set sup { margin-left: -4px; }
.b33 { font-size: 15px; }
.ink {
  width: 20px;
  height: 20px;
  display: flex;
  justify-content: center;
  line-height: 16px;
  border-bottom: 5px solid;
}
.ink.yellow { border-color: #ff0; font-size: 11px; }
.ink.red { border-color: #f00; font: 700 17px/15px "Liberation Serif", serif; color: #2f4f98; }
.set .on, .viewset .on { background: linear-gradient(#fcd9a0 0 40%, #fcb757 45%, #fee08c); }
.set .pil { font-size: 17px; font-weight: 700; }

/* style gallery */
.gallery {
  flex: 1;
  display: flex;
  justify-content: space-between;
  margin: 4px 0 5px 2px;
  padding: 0 4px 0 2px;
  border: 1px solid #b9cfec;
  overflow: hidden;
}
.tile {
  width: 86px;
  border: 3px solid transparent;
  background: #fff;
  background-clip: padding-box;
  flex-direction: column;
  margin: 3px 0;
  overflow: hidden;
  align-items: stretch;
}
.tile.picked { border-color: #f3b440; margin: 0; padding: 3px 0; border-radius: 2px; }
.sample {
  margin: 0 3px;
  height: 34px;
  overflow: hidden;
  text-align: left;
  white-space: nowrap;
  font: 19px/34px "Liberation Serif", serif;
  color: #000;
}
.sample.ital { font-style: italic; }
.sample.head { font-size: 26px; font-weight: 700; }
.sample.sub { font-size: 18px; }
.sample.gray { color: #808080; }
.sample.strong { font-weight: 700; color: #4f81bd; font-size: 18px; }
.cap { margin-top: 8px; color: #0c0c70; white-space: nowrap; text-align: center; }
.gscroll { width: 17px; margin: 4px 0 5px; display: flex; flex-direction: column; }
.gscroll button { flex: 1; border: 1px solid #a9c4e6; background: #cfe0f6; }
.gscroll .dim { background: #e6e9ee; }
.restyle { width: 69px; flex-direction: column; justify-content: flex-end; padding-bottom: 2px; }
.edit .line { margin-top: auto; margin-bottom: 4px; padding-left: 11px; gap: 8px; }

/* banner in the corner */
.mark {
  position: absolute;
  right: 0;
  top: 0;
  width: 169px;
  height: 109px;
  padding: 0 3px;
  display: flex;
  flex-direction: column;
  color: #000;
  background: linear-gradient(#e6ebe6, #f2f6f2 30%, #d9dfd9 34%, #f4f8f4 50%, #f0f4f0 66%, #d4dcd4 74%, #eef3ee);
  white-space: nowrap;
  z-index: 3;
}
.mark strong { font: italic 700 31px/36px "Open Sans", sans-serif; }
.mark .phone { font: 22px/28px "Liberation Sans", sans-serif; margin-top: 14px; }
.mark a { font: 20px/26px "Liberation Sans", sans-serif; margin-top: 6px; color: #333; text-decoration: none; }

/* rulers */
.rulerbar {
  flex: none;
  height: 31px;
  display: grid;
  grid-template-columns: 27px 1fr 20px;
  justify-items: center;
  background: #97b5e6;
}
.corner { width: 27px; height: 28px; margin-top: 3px; background: #b4cdf2; border: 1px solid #3a66b8; }
.num text { font-size: 12px; fill: #555; text-anchor: middle; }
.vert text { transform: rotate(-90deg); }
.topright { width: 19px; display: flex; flex-direction: column; align-items: center; gap: 3px; padding-top: 5px; }
.topright span { width: 10px; height: 2px; background: #223; }
.topright button { width: 19px; height: 20px; background: #b5c2d6; border: 1px solid #98a8c4; }

/* document area */
.workspace {
  flex: 1;
  min-height: 0;
  display: grid;
  grid-template-columns: 27px 1fr 20px;
  overflow: hidden;
}
.vruler { background: #a3c1ee; overflow: hidden; }
.canvas {
  position: relative;
  display: flex;
  justify-content: center;
  overflow: hidden;
  background: linear-gradient(#9bb9ec, #80a6d8 25%, #6690cb 50%, #5b83c3 70%, #5f8bcc);
}
.swoosh { position: absolute; left: 0; top: 0; }
.doc {
  position: relative;
  flex: none;
  width: 993px;
  font: 16px/21px "Noto Sans", sans-serif;
  color: #000;
}
.page {
  background: #fff;
  padding: 0 60px 0 141px;
  border-left: 1px solid #445;
  box-shadow: 2px 0 0 #445878, 5px 0 3px #4a6898;
}
/* the first page is scrolled slightly past its top line */
.first { margin-top: -3px; height: 673px; border-bottom: 2px solid #444; }
.next { padding-top: 8px; height: 120px; }
.doc p, .doc h2, .doc h3 { margin: 0; font-size: 16px; line-height: 21px; white-space: nowrap; }
.doc h2, .doc h3 { font-size: 17px; font-weight: 700; }
.doc .pil { font-weight: 700; }
.doc .gap { margin-top: 22px; }
.doc .wide { margin-top: 24px; }
.tablewrap { padding-left: 96px; }
.doc table { border-collapse: collapse; table-layout: fixed; width: 602px; line-height: 20px; }
.doc td, .doc th { border: 1px solid #000; padding: 0; height: 26px; text-align: center; vertical-align: bottom; }
.doc th { font: 700 16px/20px "Open Sans", sans-serif; height: 129px; white-space: nowrap; }
.doc tbody td { padding-left: 6px; }
.doc td:first-child { width: 66px; text-align: right; padding: 0 3px 0 0; }
.doc th:nth-child(2), .doc th:nth-child(5) { width: 114px; }
.doc th:nth-child(3) { width: 177px; }
.doc th:nth-child(4) { width: 115px; }
.doc td.lead { text-align: left; padding-left: 10px; }
.doc td.end { width: 16px; border: 0; vertical-align: top; text-align: left; padding: 0; line-height: 18px; color: #333; }

/* scroll bar */
.vscroll {
  display: flex;
  flex-direction: column;
  padding: 0 1px;
  background: #a6c3f0;
}
.vscroll .up, .vscroll .down { height: 20px; background: #7494c8; }
.track { flex: 1; background: #6a8dc4; display: flex; flex-direction: column; }
.track::before { content: ""; flex: 151; }
.track::after { content: ""; flex: 308; }
.thumb {
  flex: 213;
  display: flex;
  flex-direction: column;
  align-items: center;
  justify-content: center;
  gap: 1px;
  background: linear-gradient(90deg, #fff, #dbe5f6 50%, #b2c8ea);
  border: 1px solid #304878;
  border-radius: 2px;
}
.thumb i { width: 8px; height: 1px; background: #5b78a8; }
.browse { height: 63px; display: flex; flex-direction: column; justify-content: space-evenly; padding-bottom: 2px; }

/* status bar */
.status {
  flex: none;
  height: 27px;
  display: flex;
  align-items: stretch;
  border-top: 1px solid #5f86ba;
  background: linear-gradient(#dce9fb, #cfdffa 45%, #bcd3f8 50%, #d5e4fb);
  color: #0c2a60;
}
.msg { width: 839px; padding: 6px 8px 0; border-right: 1px solid #7f9fcc; }
.rest { flex: 1; }
.views {
  width: 341px;
  display: flex;
  align-items: center;
  padding: 0 5px 0 6px;
  border-left: 1px solid #6f95cc;
  background: linear-gradient(#c6dcfa, #a6c6f3 45%, #8db4ec 50%, #b4d0f8);
}
.viewset { display: flex; height: 23px; border: 1px solid #6287ba; border-radius: 3px; background: #bcd3f4; }
.viewset button { width: 22px; border-right: 1px solid #9ab5dc; }
.viewset button:last-child { border-right: 0; }
.zoomval { width: 50px; color: #1c3158; }
.views input {
  flex: 1;
  min-width: 0;
  margin: 0;
  height: 20px;
  appearance: none;
  background: linear-gradient(#5d7eac, #5d7eac) center / 100% 1px no-repeat;
}
.views input::-webkit-slider-thumb {
  appearance: none;
  width: 11px;
  height: 16px;
  border: 1px solid #4a5f80;
  background: #eaf2fc;
  border-radius: 1px 1px 6px 6px;
}

/* taskbar */
.taskbar {
  flex: none;
  height: 48px;
  display: flex;
  justify-content: space-between;
  background: #4b80a2;
  color: #fff;
}
.apps { display: flex; gap: 4px; padding: 1px 0 1px 17px; }
.app { width: 66px; }
.app.open { background: #7298b8; border: 1px solid #a3bfd2; }
.app.current { background: #a5bcd4; border-color: #e6eef6; border-right-width: 2px; box-shadow: inset -3px 0 0 #7298b8, inset -4px 0 0 #e6eef6, inset -6px 0 0 #7298b8, inset -7px 0 0 #e6eef6; padding-right: 7px; }
.tray { display: flex; align-items: center; gap: 10px; padding: 2px 19px 0 0; }
.tray .lang { margin-left: 8px; font-size: 14px; }
.tray button:first-child { margin-right: 8px; }
.clock { width: 88px; flex-direction: column; font-size: 14px; line-height: 22px; }
```
